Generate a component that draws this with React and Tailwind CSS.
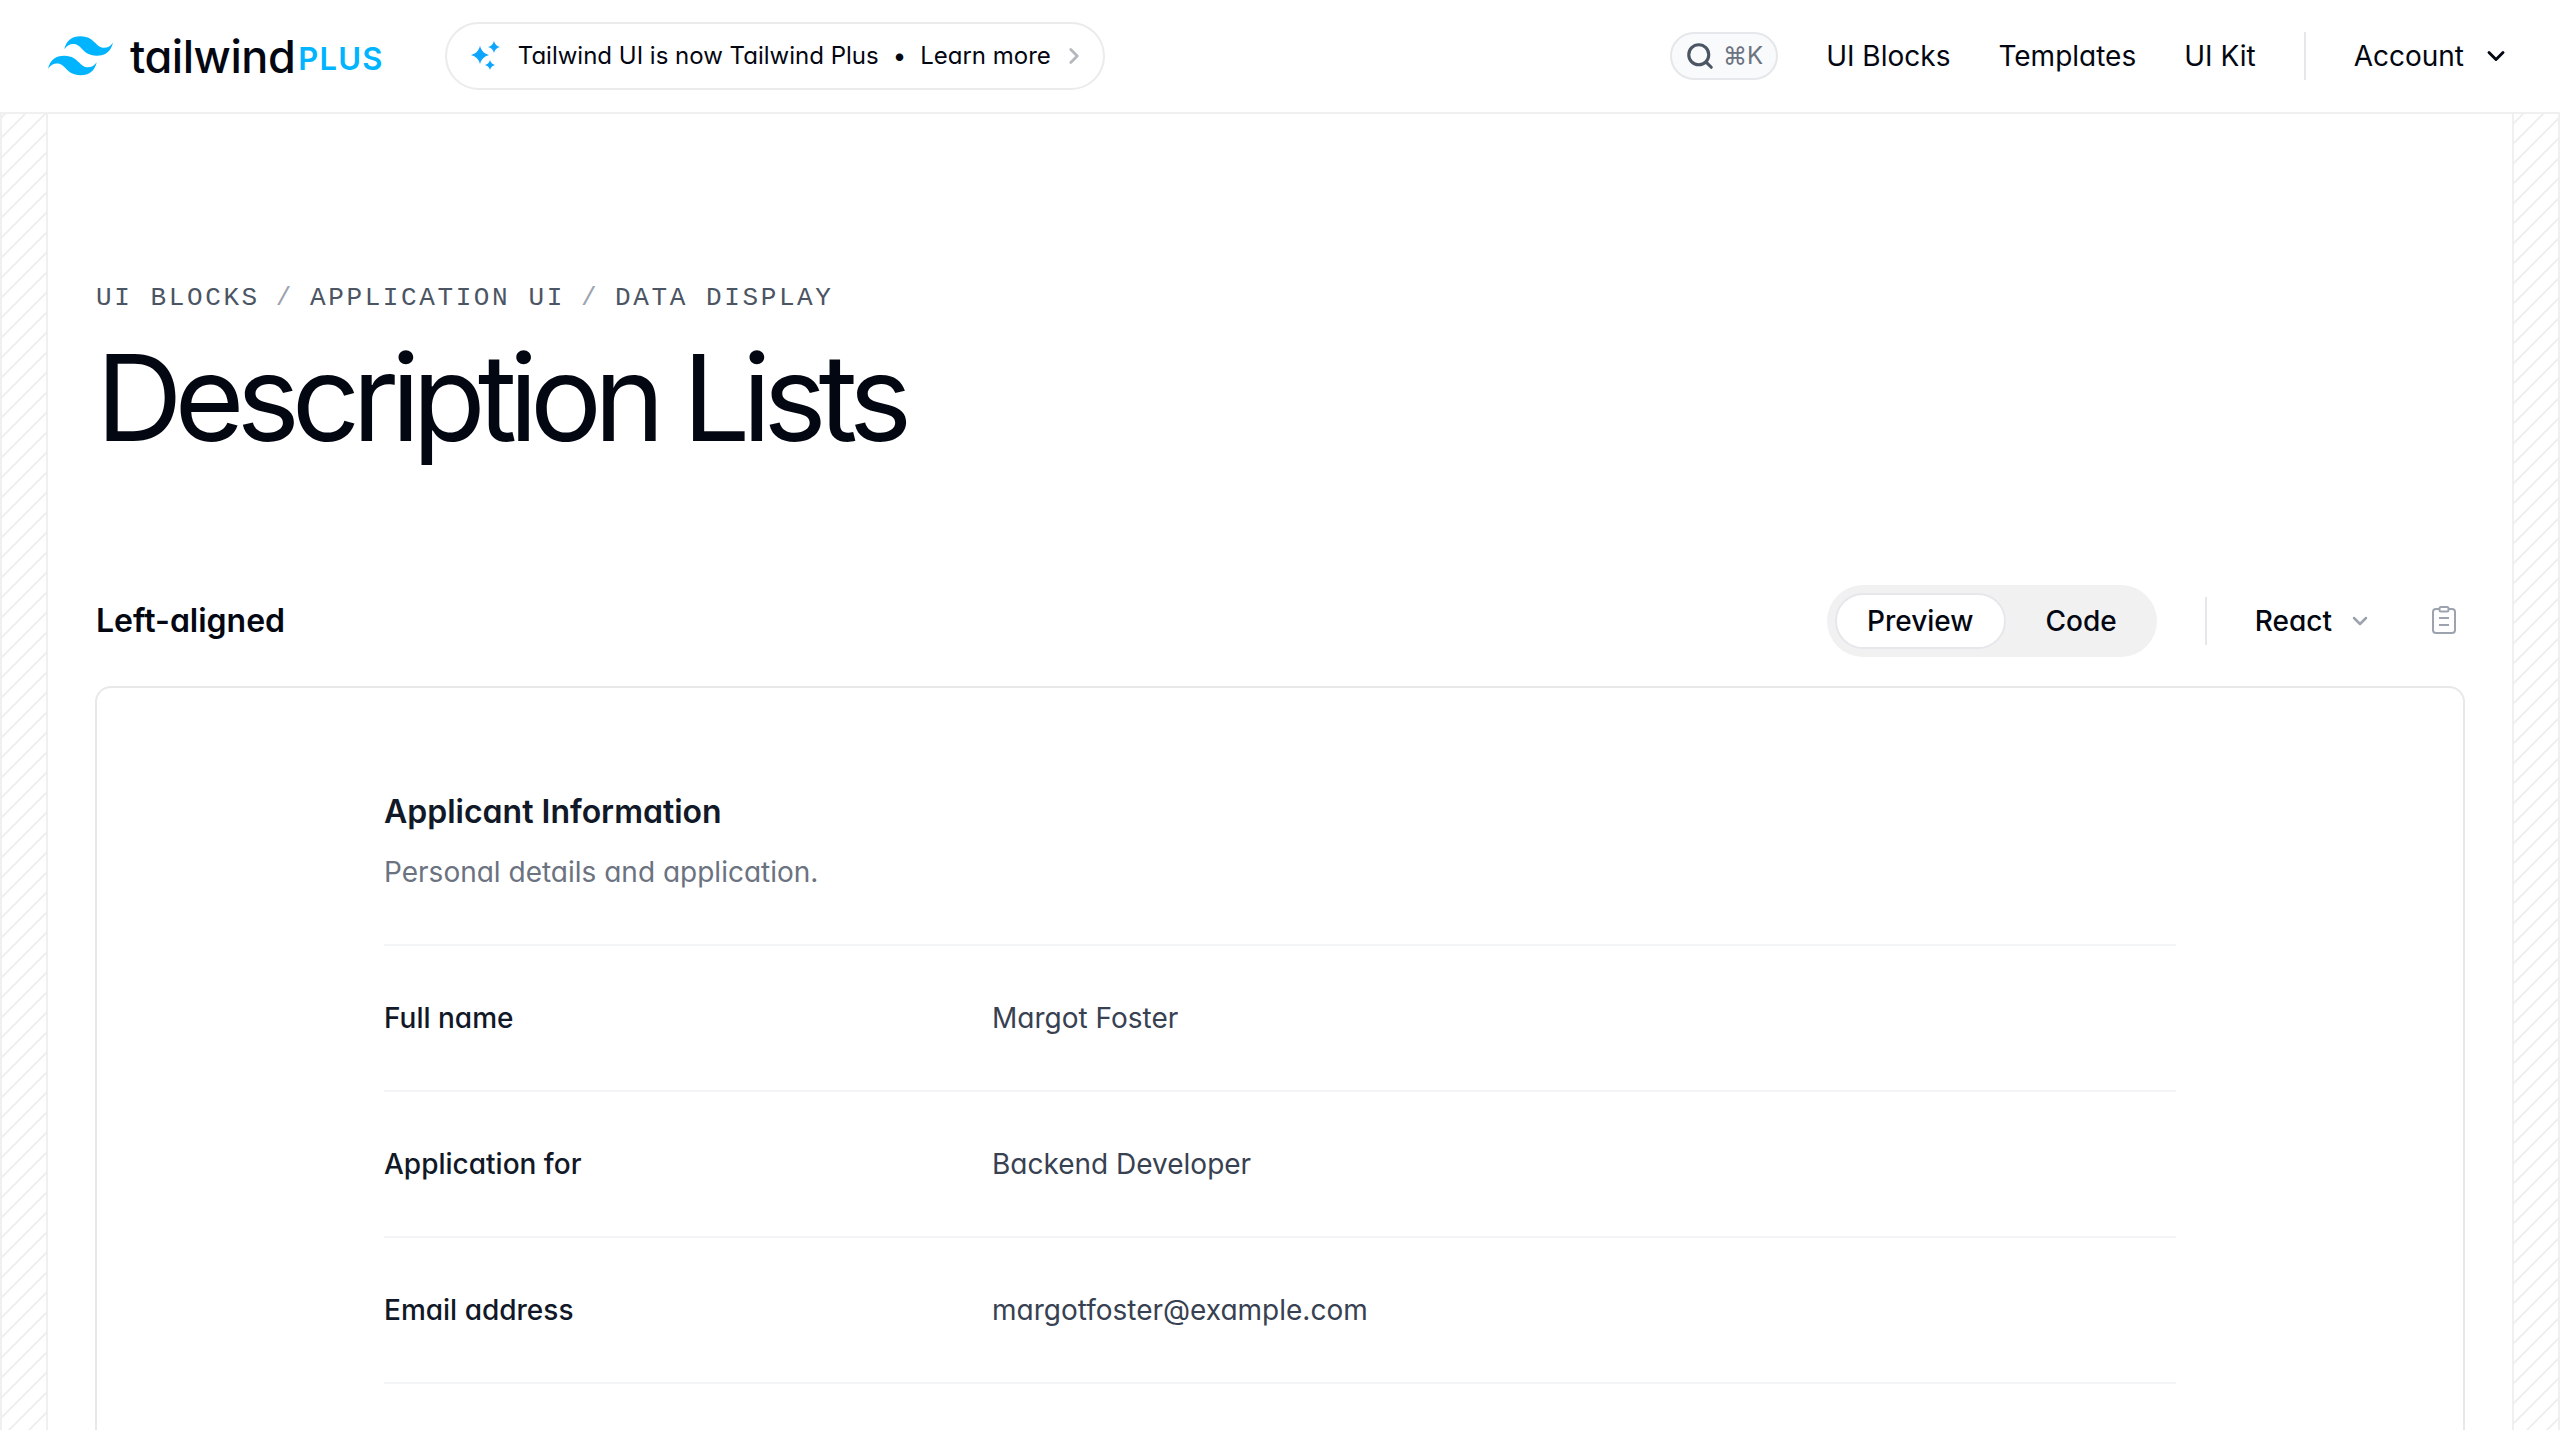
import { ChevronDown, ChevronRight, Search } from "lucide-react";

const NAV = ["UI Blocks", "Templates", "UI Kit"];

const ROWS = [
  { label: "Full name", value: "Margot Foster" },
  { label: "Application for", value: "Backend Developer" },
  { label: "Email address", value: "margotfoster@example.com" },
];

function Logo() {
  return (
    <a href="#" className="flex items-center">
      <svg viewBox="0 0 54 33" className="h-[40px] w-[65px] text-[#00b4ff]" fill="currentColor">
        <path d="M27 0c-7.2 0-11.7 3.6-13.5 10.8 2.7-3.6 5.85-4.95 9.45-4.05 2.054.513 3.522 2.004 5.147 3.653C30.744 13.09 33.808 16.2 40.5 16.2c7.2 0 11.7-3.6 13.5-10.8-2.7 3.6-5.85 4.95-9.45 4.05-2.054-.513-3.522-2.004-5.147-3.653C36.756 3.11 33.692 0 27 0zM13.5 16.2C6.3 16.2 1.8 19.8 0 27c2.7-3.6 5.85-4.95 9.45-4.05 2.054.514 3.522 2.004 5.147 3.653C17.244 29.29 20.308 32.4 27 32.4c7.2 0 11.7-3.6 13.5-10.8-2.7 3.6-5.85 4.95-9.45 4.05-2.054-.513-3.522-2.004-5.147-3.653C23.256 19.31 20.192 16.2 13.5 16.2z" />
      </svg>
      <span className="ml-[17px] text-[45px] leading-none font-medium tracking-[-0.01em] text-[#030712]">
        tailwind
      </span>
      <span className="mt-[5px] ml-[3px] text-[31px] leading-none font-semibold tracking-[0.04em] text-[#00b4ff]">
        PLUS
      </span>
    </a>
  );
}

function Sparkles() {
  return (
    <svg viewBox="0 0 30 30" className="h-[30px] w-[30px] text-[#0ea5ff]" fill="currentColor">
      <path d="M9 5Q10.800 12.200 18 14Q10.800 15.800 9 23Q7.200 15.800 0 14Q7.200 12.200 9 5Z" />
      <path d="M23 0Q24.200 4.800 29 6Q24.200 7.200 23 12Q21.800 7.200 17 6Q21.800 4.800 23 0Z" />
      <path d="M19 19Q20 23 24 24Q20 25 19 29Q18 25 14 24Q18 23 19 19Z" />
    </svg>
  );
}

function ClipboardIcon() {
  return (
    <svg
      viewBox="0 0 24 28"
      className="mr-2 mb-[2px] ml-[60px] h-[28px] w-[24px] text-[#9ca3af]"
      fill="none"
      stroke="currentColor"
      strokeWidth="2"
    >
      <rect x="1" y="3" width="22" height="24" rx="3" />
      <rect x="7.500" y="1" width="9" height="4.500" rx="1.500" fill="white" />
      <path d="M7 12h10M7 19h10" />
    </svg>
  );
}

function Header() {
  return (
    <header className="flex h-[114px] items-center justify-between border-b-2 border-[#f0f0f1] pr-[50px] pl-12">
      <div className="flex items-center">
        <Logo />
        <a
          href="#"
          className="ml-[61px] flex h-[68px] w-[660px] items-center rounded-full border-2 border-[#ebebec] pl-6 text-[24px] whitespace-nowrap text-[#030712]"
        >
          <Sparkles />
          <span className="ml-[17px]">Tailwind UI is now Tailwind Plus</span>
          <span className="mx-[14px]">•</span>
          <span>Learn more</span>
          <ChevronRight className="ml-[10px] h-[26px] w-[26px] text-[#b4b7bd]" strokeWidth={2.5} />
        </a>
      </div>
      <nav className="flex items-center text-[28px] text-[#030712]">
        <button className="flex h-12 w-[108px] items-center justify-center gap-[8px] rounded-full border-2 border-[#e5e7eb] bg-[#f9fafb] text-[24px] text-[#6b7280]">
          <Search className="h-[30px] w-[30px] text-[#4b5563]" strokeWidth={2.5} />
          <span>⌘K</span>
        </button>
        <div className="ml-12 flex gap-12">
          {NAV.map((item) => (
            <a key={item} href="#">
              {item}
            </a>
          ))}
        </div>
        <div className="mx-12 h-12 w-[2px] bg-[#e5e7eb]" />
        <a href="#" className="flex items-center">
          Account
          <ChevronDown className="ml-[18px] h-[28px] w-[28px]" strokeWidth={2.5} />
        </a>
      </nav>
    </header>
  );
}

function Toolbar() {
  return (
    <div className="flex items-center justify-between">
      <h2 className="text-[32px] font-semibold text-[#030712]">Left-aligned</h2>
      <div className="flex items-center">
        <div className="flex h-[72px] items-center rounded-full bg-[#f1f1f2] p-2 text-[28px] font-medium text-[#030712]">
          <span className="flex h-[56px] items-center rounded-full border-2 border-[#e5e7eb] bg-white px-[30px]">
            Preview
          </span>
          <span className="pr-8 pl-10">Code</span>
        </div>
        <div className="mx-12 h-12 w-[2px] bg-[#e5e7eb]" />
        <span className="flex items-center text-[28px] font-medium text-[#030712]">
          React
          <ChevronDown className="ml-[16px] h-[24px] w-[24px] text-[#9ca3af]" strokeWidth={2.5} />
        </span>
        <ClipboardIcon />
      </div>
    </div>
  );
}

function DescriptionCard() {
  return (
    <div className="-mx-px mt-[29px] rounded-t-[16px] border-2 border-b-0 border-[#e8e8e9] bg-white pt-24 pb-[200px]">
      <div className="mx-auto w-[1792px]">
        <h3 className="text-[32px] leading-[56px] font-semibold text-[#111827]">
          Applicant Information
        </h3>
        <p className="mt-[8px] text-[28px] leading-[48px] text-[#6b7280]">
          Personal details and application.
        </p>
        <dl className="mt-[48px] border-t-2 border-[#f3f4f6]">
          {ROWS.map((row) => (
            <div
              key={row.label}
              className="grid grid-cols-3 gap-8 border-b-2 border-[#f3f4f6] py-12"
            >
              <dt className="text-[28px] leading-[48px] font-medium text-[#111827]">{row.label}</dt>
              <dd className="col-span-2 text-[28px] leading-[48px] text-[#374151]">{row.value}</dd>
            </div>
          ))}
        </dl>
      </div>
    </div>
  );
}

export default function App() {
  return (
    <div className="h-[1430px] overflow-hidden bg-white [font-family:Inter,sans-serif] [font-feature-settings:'cv11']">
      <Header />
      <div className="flex h-[1316px]">
        <div className="w-12 shrink-0 border-x-2 border-[#f0f0f1] bg-[repeating-linear-gradient(135deg,transparent_0,transparent_1.4px,#f0f0f1_1.4px,#f0f0f1_3.2px,transparent_3.2px,transparent_14.14px)]" />
        <main className="min-w-0 flex-1 px-12 pt-[164px]">
          <p className="flex gap-[16px] text-[26px] leading-[40px] tracking-[0.1em] text-[#4b5563] [font-family:'Liberation_Mono',monospace]">
            <span>UI BLOCKS</span>
            <span className="text-[#9ca3af]">/</span>
            <span>APPLICATION UI</span>
            <span className="text-[#9ca3af]">/</span>
            <span>DATA DISPLAY</span>
          </p>
          <h1 className="mt-[20px] text-[120px] leading-[120px] font-normal tracking-[-0.067em] text-[#030712]">
            Description Lists
          </h1>
          <div className="mt-[127px]">
            <Toolbar />
            <DescriptionCard />
          </div>
        </main>
        <div className="w-12 shrink-0 border-x-2 border-[#f0f0f1] bg-[repeating-linear-gradient(135deg,transparent_0,transparent_5.6px,#f0f0f1_5.6px,#f0f0f1_7.4px,transparent_7.4px,transparent_14.14px)]" />
      </div>
    </div>
  );
}
